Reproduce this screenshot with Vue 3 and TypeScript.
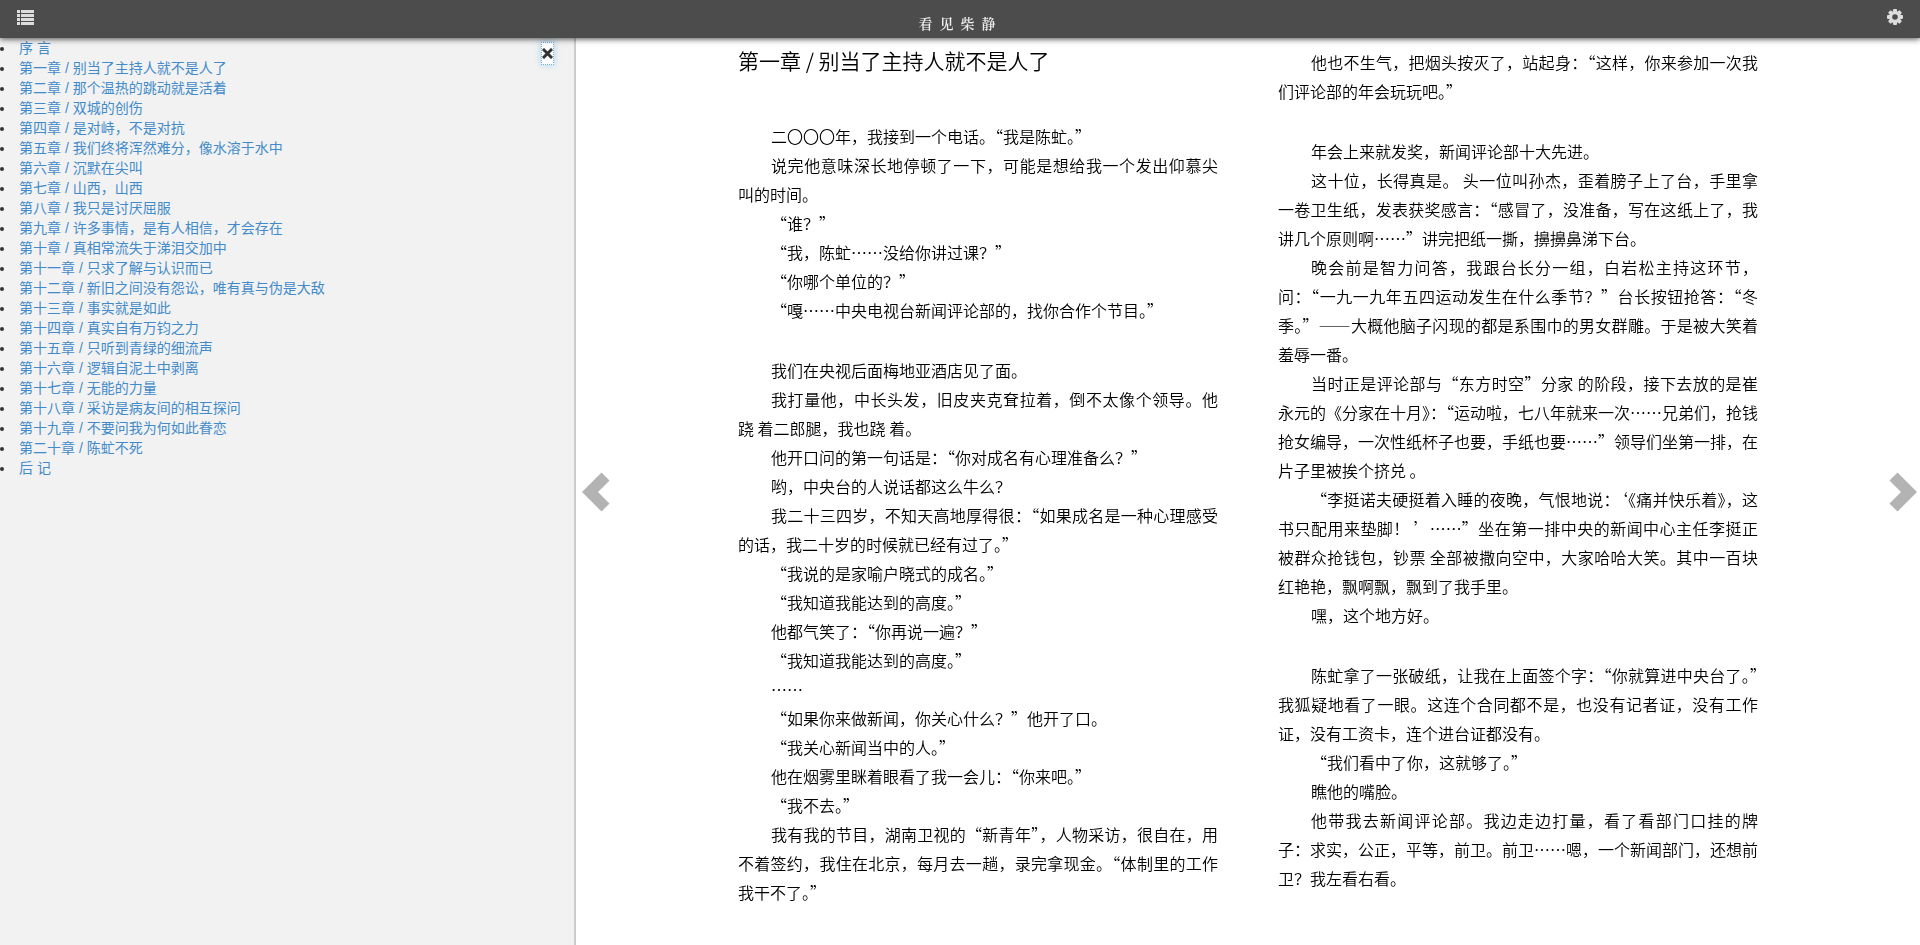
<script setup lang="ts">
import { ref } from 'vue'

const menuOpen = ref(true)

const chapters: string[] = [
  '序 言',
  '第一章 / 别当了主持人就不是人了',
  '第二章 / 那个温热的跳动就是活着',
  '第三章 / 双城的创伤',
  '第四章 / 是对峙，不是对抗',
  '第五章 / 我们终将浑然难分，像水溶于水中',
  '第六章 / 沉默在尖叫',
  '第七章 / 山西，山西',
  '第八章 / 我只是讨厌屈服',
  '第九章 / 许多事情，是有人相信，才会存在',
  '第十章 / 真相常流失于涕泪交加中',
  '第十一章 / 只求了解与认识而已',
  '第十二章 / 新旧之间没有怨讼，唯有真与伪是大敌',
  '第十三章 / 事实就是如此',
  '第十四章 / 真实自有万钧之力',
  '第十五章 / 只听到青绿的细流声',
  '第十六章 / 逻辑自泥土中剥离',
  '第十七章 / 无能的力量',
  '第十八章 / 采访是病友间的相互探问',
  '第十九章 / 不要问我为何如此眷恋',
  '第二十章 / 陈虻不死',
  '后 记',
]

// An empty string is a blank line between scenes.
const leftPage: string[] = [
  '二〇〇〇年，我接到一个电话。“我是陈虻。”',
  '说完他意味深长地停顿了一下，可能是想给我一个发出仰慕尖叫的时间。',
  '“谁？”',
  '“我，陈虻……没给你讲过课？”',
  '“你哪个单位的？”',
  '“嘎……中央电视台新闻评论部的，找你合作个节目。”',
  '',
  '我们在央视后面梅地亚酒店见了面。',
  '我打量他，中长头发，旧皮夹克耷拉着，倒不太像个领导。他跷 着二郎腿，我也跷 着。',
  '他开口问的第一句话是：“你对成名有心理准备么？”',
  '哟，中央台的人说话都这么牛么？',
  '我二十三四岁，不知天高地厚得很：“如果成名是一种心理感受的话，我二十岁的时候就已经有过了。”',
  '“我说的是家喻户晓式的成名。”',
  '“我知道我能达到的高度。”',
  '他都气笑了：“你再说一遍？”',
  '“我知道我能达到的高度。”',
  '……',
  '“如果你来做新闻，你关心什么？”他开了口。',
  '“我关心新闻当中的人。”',
  '他在烟雾里眯着眼看了我一会儿：“你来吧。”',
  '“我不去。”',
  '我有我的节目，湖南卫视的“新青年”，人物采访，很自在，用不着签约，我住在北京，每月去一趟，录完拿现金。“体制里的工作我干不了。”',
]

const rightPage: string[] = [
  '他也不生气，把烟头按灭了，站起身：“这样，你来参加一次我们评论部的年会玩玩吧。”',
  '',
  '年会上来就发奖，新闻评论部十大先进。',
  '这十位，长得真是。 头一位叫孙杰，歪着膀子上了台，手里拿一卷卫生纸，发表获奖感言：“感冒了，没准备，写在这纸上了，我讲几个原则啊……”讲完把纸一撕，擤擤鼻涕下台。',
  '晚会前是智力问答，我跟台长分一组，白岩松主持这环节，问：“一九一九年五四运动发生在什么季节？”台长按钮抢答：“冬季。”——大概他脑子闪现的都是系围巾的男女群雕。于是被大笑着羞辱一番。',
  '当时正是评论部与“东方时空”分家 的阶段，接下去放的是崔永元的《分家在十月》：“运动啦，七八年就来一次……兄弟们，抢钱抢女编导，一次性纸杯子也要，手纸也要……”领导们坐第一排，在片子里被挨个挤兑 。',
  '“李挺诺夫硬挺着入睡的夜晚，气恨地说：‘《痛并快乐着》，这书只配用来垫脚！ ’……”坐在第一排中央的新闻中心主任李挺正被群众抢钱包，钞票 全部被撒向空中，大家哈哈大笑。其中一百块红艳艳，飘啊飘，飘到了我手里。',
  '嘿，这个地方好。',
  '',
  '陈虻拿了一张破纸，让我在上面签个字：“你就算进中央台了。”我狐疑地看了一眼。这连个合同都不是，也没有记者证，没有工作证，没有工资卡，连个进台证都没有。',
  '“我们看中了你，这就够了。”',
  '瞧他的嘴脸。',
  '他带我去新闻评论部。我边走边打量，看了看部门口挂的牌子：求实，公正，平等，前卫。前卫……嗯，一个新闻部门，还想前卫？我左看右看。',
]
</script>

<template>
  <div class="app" lang="zh-CN">
    <header class="topbar">
      <button class="icon-button" type="button" aria-label="目录" @click="menuOpen = !menuOpen">
        <svg width="17" height="16" viewBox="0 0 17 16" fill="#dddddd" aria-hidden="true">
          <path d="M0 1h3v3H0zM4 1h13v3H4zM0 5h3v3H0zM4 5h13v3H4zM0 9h3v3H0zM4 9h13v3H4zM0 13h3v3H0zM4 13h13v3H4z" />
        </svg>
      </button>
      <h1 class="book-title">看见柴静</h1>
      <button class="icon-button" type="button" aria-label="设置">
        <svg width="16" height="16" viewBox="0 0 16 16" aria-hidden="true">
          <g fill="#dddddd">
            <rect x="6" y="0" width="4" height="16" rx="1" />
            <rect x="6" y="0" width="4" height="16" rx="1" transform="rotate(45 8 8)" />
            <rect x="6" y="0" width="4" height="16" rx="1" transform="rotate(90 8 8)" />
            <rect x="6" y="0" width="4" height="16" rx="1" transform="rotate(135 8 8)" />
            <circle cx="8" cy="8" r="6" />
          </g>
          <circle cx="8" cy="8" r="2.8" fill="#4c4c4c" />
        </svg>
      </button>
    </header>

    <div class="body">
      <nav v-if="menuOpen" class="sidebar" aria-label="章节目录">
        <ul class="chapters">
          <li v-for="chapter in chapters" :key="chapter">
            <a href="#">{{ chapter }}</a>
          </li>
        </ul>
        <button class="close" type="button" aria-label="关闭" @click="menuOpen = false">
          <svg width="11" height="11" viewBox="0 0 11 11" aria-hidden="true">
            <path d="M2 2l7 7M9 2l-7 7" stroke="#333333" stroke-width="3" stroke-linecap="square" />
          </svg>
        </button>
      </nav>

      <main class="reader">
        <button class="turn" type="button" aria-label="上一页">
          <svg width="28" height="40" viewBox="0 0 28 40" fill="#b3b3b3" aria-hidden="true">
            <path d="M0 20L19.500 .5l8 8L16 20l11.500 11.500-8 8z" />
          </svg>
        </button>
        <article class="pages">
          <section class="page">
            <h2 class="chapter-title">第一章 / 别当了主持人就不是人了</h2>
            <p v-for="(text, i) in leftPage" :key="i" :class="{ blank: !text }">{{ text }}</p>
          </section>
          <section class="page">
            <p v-for="(text, i) in rightPage" :key="i" :class="{ blank: !text }">{{ text }}</p>
          </section>
        </article>
        <button class="turn next" type="button" aria-label="下一页">
          <svg width="28" height="40" viewBox="0 0 28 40" fill="#b3b3b3" aria-hidden="true">
            <path d="M28 20L8.500 .5l-8 8L12 20 .5 31.500l8 8z" />
          </svg>
        </button>
      </main>
    </div>
  </div>
</template>

<style>
body {
  margin: 0;
  background: #ffffff;
}
</style>

<style scoped>
.app {
  display: flex;
  flex-direction: column;
  min-height: 100vh;
  color: #333333;
  font-family: "Liberation Sans", "Noto Sans CJK SC", sans-serif;
  font-size: 14px;
  line-height: 20px;
}

button {
  display: flex;
  padding: 0;
  border: 0;
  background: none;
  cursor: pointer;
}

.topbar {
  position: relative;
  z-index: 1;
  display: flex;
  align-items: flex-start;
  justify-content: space-between;
  box-sizing: border-box;
  height: 38px;
  padding: 9px 17px 0;
  background: #4c4c4c;
  box-shadow: 0 1px 6px rgba(0, 0, 0, 0.7);
}

.book-title {
  margin: 4px 0 0;
  color: #eeeeee;
  font-family: "Noto Serif CJK SC", "Liberation Serif", serif;
  font-size: 14px;
  font-weight: 600;
  line-height: 20px;
  letter-spacing: 7px;
}

.body {
  display: flex;
  flex: 1;
}

.sidebar {
  display: flex;
  align-items: flex-start;
  justify-content: space-between;
  box-sizing: border-box;
  flex: 0 0 30%;
  padding-right: 20px;
  border-right: 2px solid #cccccc;
  background: #f2f2f2;
}

.chapters {
  margin: 0;
  padding-left: 15px;
}

.chapters a {
  padding-left: 4px;
  color: #428bca;
  text-decoration: none;
}

.close {
  margin-top: 4px;
  padding: 5px 0;
  border: 1px dotted #66afe9;
  background: #ffffff;
  box-shadow: 0 0 6px rgba(102, 175, 233, 0.5);
}

.reader {
  display: grid;
  grid-template-columns: 36px minmax(0, 1fr) 36px;
  flex: 1;
  min-width: 0;
}

.turn {
  align-items: center;
  padding-left: 6px;
}

.turn.next {
  justify-content: flex-end;
  padding: 0 3px 0 0;
}

.pages {
  display: grid;
  grid-template-columns: 1fr 1fr;
  gap: 60px;
  width: 100%;
  max-width: 1020px;
  margin: 0 auto;
  padding: 10px 0 32px;
  box-sizing: border-box;
  color: #000000;
  font-family: "Noto Sans CJK SC", sans-serif;
  font-size: 16px;
  font-weight: 350;
  line-height: 29px;
  will-change: transform;
}

.chapter-title {
  margin: 0 0 50px;
  font-size: 21px;
  font-weight: 350;
  line-height: 24px;
}

.page p {
  margin: 0;
  text-align: justify;
  text-indent: 33px;
}

.page .blank {
  height: 31px;
}
</style>
